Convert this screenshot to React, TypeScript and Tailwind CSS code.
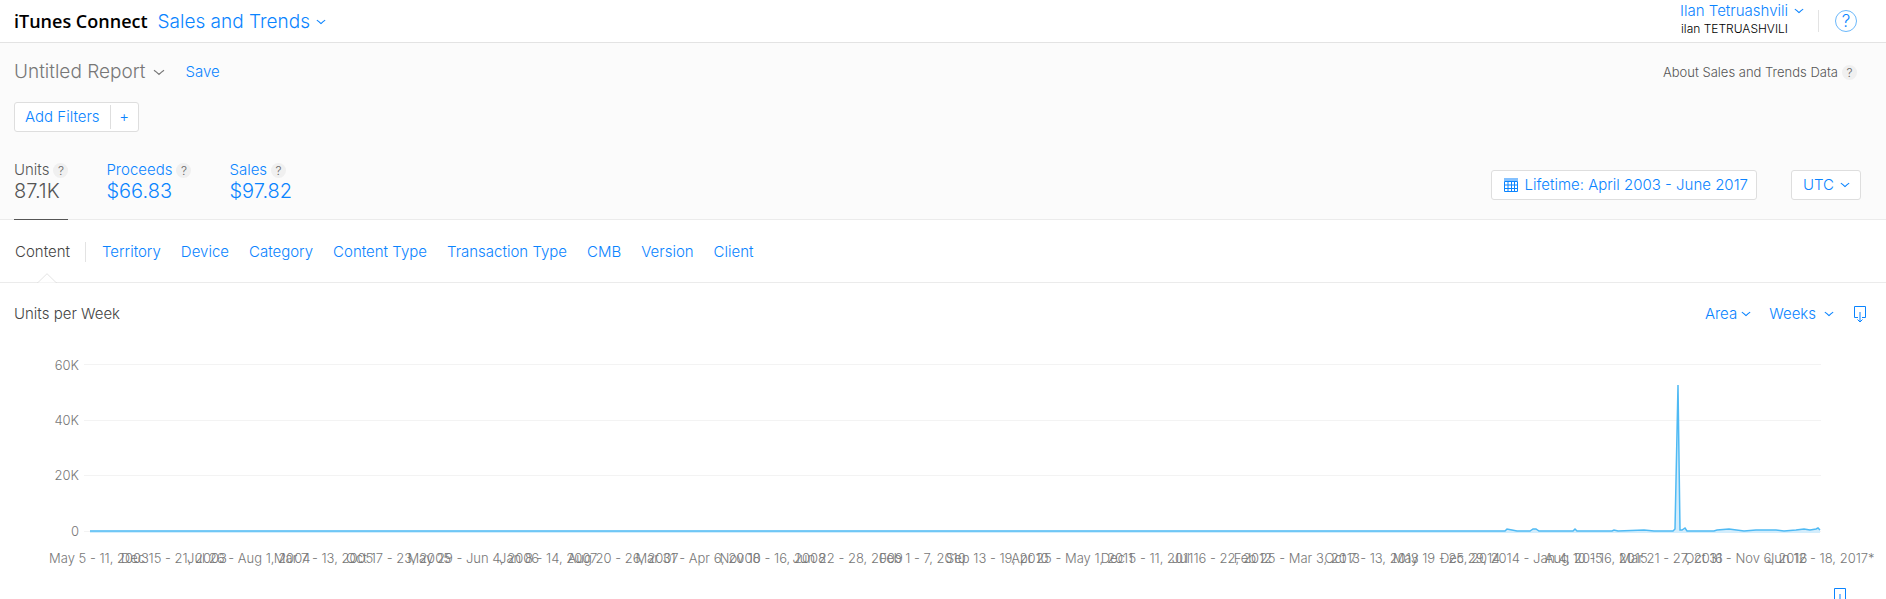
import { clsx } from 'clsx'

const metrics = [
  { name: 'Units', value: '87.1K', active: true },
  { name: 'Proceeds', value: '$66.83', active: false },
  { name: 'Sales', value: '$97.82', active: false },
]

const dimensions = [
  'Territory',
  'Device',
  'Category',
  'Content Type',
  'Transaction Type',
  'CMB',
  'Version',
  'Client',
]

const yTicks = ['60K', '40K', '20K', '0']

const weeks = [
  'May 5 - 11, 2003',
  'Dec 15 - 21, 2003',
  'Jul 26 - Aug 1, 2004',
  'Mar 7 - 13, 2005',
  'Oct 17 - 23, 2005',
  'May 29 - Jun 4, 2006',
  'Jan 8 - 14, 2007',
  'Aug 20 - 26, 2007',
  'Mar 31 - Apr 6, 2008',
  'Nov 10 - 16, 2008',
  'Jun 22 - 28, 2009',
  'Feb 1 - 7, 2010',
  'Sep 13 - 19, 2010',
  'Apr 25 - May 1, 2011',
  'Dec 5 - 11, 2011',
  'Jul 16 - 22, 2012',
  'Feb 25 - Mar 3, 2013',
  'Oct 7 - 13, 2013',
  'May 19 - 25, 2014',
  'Dec 29, 2014 - Jan 4, 2015',
  'Aug 10 - 16, 2015',
  'Mar 21 - 27, 2016',
  'Oct 31 - Nov 6, 2016',
  'Jun 12 - 18, 2017*',
]

// x runs over 1737 units, y over 167 units with zero at the bottom
const series =
  '6,167 1421,167 1423,165 1428,166 1433,167 1446,167 1449,165 1452,165 1455,167 1489,167 1491,165 1493,167 1528,167 1530,166 1534,167 1560,166 1570,167 1589,167 1591,165 1594,21 1596,166 1598,166 1601,164 1603,167 1630,167 1633,166 1645,165 1660,167 1672,166 1680,166 1692,166 1700,167 1712,166 1720,165 1726,166 1732,165 1734,164 1736,166'

const Chevron = ({ className }: { className?: string }) => (
  <svg viewBox="0 0 12 7" fill="none" stroke="currentColor" strokeWidth="1.3" className={clsx('pointer-events-none', className)} aria-hidden="true">
    <path d="M1 1.200c1.500 1 3.400 2.600 5 4.200 1.600-1.600 3.500-3.200 5-4.200" />
  </svg>
)

const Hint = ({ label }: { label: string }) => (
  <button aria-label={label} className="size-[15px] shrink-0 rounded-full bg-[#f0f0f0] text-center text-[12px] leading-[15px] text-[#666]">
    ?
  </button>
)

const DownloadIcon = () => (
  <svg viewBox="0 0 12 17" fill="none" stroke="currentColor" className="h-[17px] w-3 shrink-0" aria-hidden="true">
    <path d="M4 11.500H.5V.5h11v11H8" />
    <path d="M6 6v10M3.500 13.500 6 16l2.500-2.500" />
  </svg>
)

const CalendarIcon = () => (
  <svg viewBox="0 0 14 14" className="size-3.5 shrink-0" fill="none" stroke="currentColor" aria-hidden="true">
    <path d="M0 0h14v3H0z" fill="currentColor" fillOpacity="0.500" stroke="none" />
    <path d="M.5 3.500h13v10H.5zM4 3.500v10M7.500 3.500v10M10.500 3.500v10M.5 7h13M.5 10.500h13" />
  </svg>
)

const Picker = ({ label, value, className, chevron }: { label: string; value: string; className?: string; chevron: string }) => (
  <div className="relative flex items-center">
    <select aria-label={label} defaultValue={value} className={clsx('appearance-none bg-transparent [field-sizing:content]', className)}>
      <option>{value}</option>
    </select>
    <Chevron className={clsx('absolute', chevron)} />
  </div>
)

const Header = () => (
  <header className="flex h-[43px] items-center justify-between border-b border-[#e3e3e3] pr-[29px] pl-3.5">
    <div className="flex items-center">
      <h1 className="font-['Open_Sans'] text-[18px] leading-6 font-semibold text-black">iTunes Connect</h1>
      <button className="ml-2.5 flex items-center gap-1.5 pt-0.5 text-[19px] leading-6 font-light">
        Sales and Trends
        <Chevron className="h-1.5 w-2.5" />
      </button>
    </div>
    <div className="flex items-center">
      <div className="flex flex-col pb-0.5">
        <button className="flex items-center justify-end gap-1.5 text-[15px] leading-[18px]">
          Ilan Tetruashvili
          <Chevron className="h-1.5 w-2.5" />
        </button>
        <p className="pr-4 text-right text-[12px] leading-[18px] text-black">ilan TETRUASHVILI</p>
      </div>
      <div className="ml-3.5 h-[22px] w-px bg-[#e3e3e3]" />
      <button aria-label="Help" className="ml-4 size-[22px] rounded-full border border-[#6bb8fb] text-center text-[17px] leading-5">
        ?
      </button>
    </div>
  </header>
)

const ReportBar = () => (
  <section className="border-b border-[#ebebeb] bg-[#fbfbfb] px-3.5">
    <div className="flex items-center justify-between pt-4 pr-[15px]">
      <div className="flex items-center">
        <button className="flex items-center gap-2 text-[19px] leading-6 font-light text-[#777]">
          Untitled Report
          <Chevron className="h-[7px] w-3" />
        </button>
        <button className="ml-5 text-[15px] leading-6">Save</button>
      </div>
      <div className="flex items-center gap-1 text-[13px] leading-[26px] text-[#555]">
        About Sales and Trends Data
        <Hint label="About this data" />
      </div>
    </div>

    <div className="mt-[17px] flex">
      <div className="flex h-[30px] items-center rounded-[3px] border border-[#dedede] bg-white text-[15px]">
        <button className="px-2.5">Add Filters</button>
        <button aria-label="Add filter" className="h-6 w-7 border-l border-[#dedede] leading-[22px]">
          +
        </button>
      </div>
    </div>

    <div className="mt-7 flex items-start justify-between pr-[11px]">
      <div className="-mb-px flex gap-[38px]">
        {metrics.map((metric) => (
          <div
            key={metric.name}
            className={clsx('flex h-[60px] flex-col border-b', metric.active ? 'border-[#555] text-[#555]' : 'border-transparent')}
          >
            <div className="flex items-center gap-1 text-[15px] leading-5">
              <button>{metric.name}</button>
              <Hint label={`About ${metric.name}`} />
            </div>
            <p className="text-[20px] leading-[22px] font-light">{metric.value}</p>
          </div>
        ))}
      </div>
      <div className="flex gap-[34px] pt-2.5 text-[15px]">
        <button className="flex h-[30px] items-center gap-1.5 rounded-[3px] border border-[#dedede] bg-white pr-2 pl-3">
          <CalendarIcon />
          Lifetime: April 2003 - June 2017
        </button>
        <Picker
          label="Time zone"
          value="UTC"
          className="h-[30px] rounded-[3px] border border-[#dedede] bg-white pr-[26px] pl-[11px]"
          chevron="right-[11px] h-1.5 w-2.5"
        />
      </div>
    </div>
  </section>
)

const Tabs = () => (
  <nav className="relative flex h-[63px] items-center border-b border-[#ebebeb] pt-0.5 pl-[15px] text-[15px]">
    <a href="#content" aria-current="page" className="text-[#444]">
      Content
    </a>
    <div className="mr-4 ml-[15px] h-5 w-px bg-[#e3e3e3]" />
    <div className="flex gap-5">
      {dimensions.map((name) => (
        <a key={name} href="#dimension">
          {name}
        </a>
      ))}
    </div>
    <svg viewBox="0 0 20 10" className="absolute -bottom-px left-[37px] h-2.5 w-5" fill="#fff" stroke="#e3e3e3" aria-hidden="true">
      <path d="M0 9.500h1L10 .7l9 8.800h1" />
    </svg>
  </nav>
)

const Chart = () => (
  <figure className="pr-[65px] pl-[42px]">
    <div className="flex h-[168px] gap-[5px]">
      <div className="flex w-[37px] flex-col justify-between pt-px text-right text-[13px] text-[#777]">
        {yTicks.map((tick) => (
          <span key={tick} className="flex h-px items-center justify-end">
            {tick}
          </span>
        ))}
      </div>
      <div className="relative flex flex-1 flex-col justify-between">
        {yTicks.map((tick) => (
          <div key={tick} className="h-px bg-[#f3f3f3]" />
        ))}
        <svg viewBox="0 0 1737 168" preserveAspectRatio="none" className="absolute inset-0 size-full overflow-visible" aria-hidden="true">
          <polygon points={`6,169 ${series} 1736,169`} fill="#d3edfc" />
          <polyline points={series} fill="none" stroke="#4fbaf4" strokeWidth="1.500" vectorEffect="non-scaling-stroke" />
        </svg>
      </div>
    </div>
    <div className="mt-4 ml-[57px] flex justify-between text-[13px] leading-5 text-[#777]">
      {weeks.map((week) => (
        <span key={week} className="flex w-0 justify-center whitespace-nowrap">
          {week}
        </span>
      ))}
    </div>
  </figure>
)

export default function App() {
  return (
    <div className="overflow-hidden bg-white font-['Inter',sans-serif] text-[15px] font-light text-[#0a84ff]">
      <Header />
      <ReportBar />
      <Tabs />
      <main>
        <div className="flex h-[62px] items-center justify-between pr-5 pl-3.5">
          <h2 className="text-[15px] text-[#444]">Units per Week</h2>
          <div className="flex items-center">
            <Picker label="Chart type" value="Area" className="pr-3.5" chevron="right-0 h-1.5 w-2.5" />
            <div className="ml-[18px]">
              <Picker label="Interval" value="Weeks" className="pr-[18px]" chevron="right-0 h-1.5 w-2.5" />
            </div>
            <button aria-label="Download chart" className="ml-5">
              <DownloadIcon />
            </button>
          </div>
        </div>
        <div className="pt-[19px]">
          <Chart />
        </div>
        <div className="mt-5 flex h-3 justify-end overflow-hidden pr-10">
          <button aria-label="Download table" className="h-[17px]">
            <DownloadIcon />
          </button>
        </div>
      </main>
    </div>
  )
}
